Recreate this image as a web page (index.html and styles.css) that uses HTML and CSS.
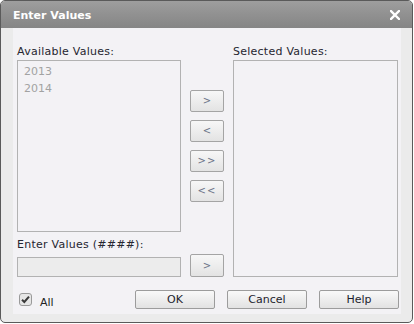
FILE: index.html
```html
<!DOCTYPE html>
<html>
<head>
<meta charset="utf-8">
<link rel="stylesheet" href="styles.css">
</head>
<body>
<div class="dialog">
  <div class="titlebar">
    <span class="title">Enter Values</span>
    <svg class="close" width="10" height="10" viewBox="0 0 10 10"><path d="M1 1L9 9M9 1L1 9" stroke="#fff" stroke-width="2.4" stroke-linecap="square"/></svg>
  </div>
  <div class="frame">
    <div class="panel">
      <div class="main">
        <div class="col left">
          <div class="label">Available Values:</div>
          <div class="listbox avail">
            <div class="item">2013</div>
            <div class="item">2014</div>
          </div>
          <div class="label enter">Enter Values (####):</div>
          <div class="input"></div>
        </div>
        <div class="col mid">
          <button class="arrow first">&gt;</button>
          <button class="arrow">&lt;</button>
          <button class="arrow dbl">&gt;&gt;</button>
          <button class="arrow dbl">&lt;&lt;</button>
          <button class="arrow add">&gt;</button>
        </div>
        <div class="col right">
          <div class="label">Selected Values:</div>
          <div class="listbox sel"></div>
        </div>
      </div>
      <div class="footer">
        <span class="check"><svg width="13" height="13" viewBox="0 0 13 13"><rect x="0.5" y="0.5" width="12" height="12" rx="2.5" fill="#e6e6e6" stroke="#9a9a9a"/><path d="M3 6.8L5.3 9L10 3.6" fill="none" stroke="#3a3a3a" stroke-width="2"/></svg></span>
        <span class="all">All</span>
        <div class="buttons">
          <button class="btn">OK</button>
          <button class="btn">Cancel</button>
          <button class="btn">Help</button>
        </div>
      </div>
    </div>
  </div>
</div>
</body>
</html>
```

FILE: styles.css
```css
html, body {
  margin: 0;
  padding: 0;
  background: #ffffff;
}
.dialog {
  width: 413px;
  height: 323px;
  box-sizing: border-box;
  border: 1px solid #5a5a5a;
  border-radius: 5px;
  overflow: hidden;
  background: #ebebeb;
  display: flex;
  flex-direction: column;
  font-family: "DejaVu Sans", Verdana, sans-serif;
  font-size: 11px;
  color: #262630;
}
.titlebar {
  height: 27px;
  flex: none;
  display: flex;
  align-items: center;
  padding: 0 12px 0 12px;
  background: linear-gradient(#9e9e9e 0%, #929292 45%, #858585 100%);
}
.title {
  color: #ffffff;
  font-weight: bold;
  font-size: 11px;
  padding-top: 1px;
}
.close {
  margin-left: auto;
  display: block;
}
.frame {
  flex: 1;
  display: flex;
  padding: 0 11px 8px 12px;
}
.panel {
  flex: 1;
  background: #f3f2f5;
  display: flex;
  flex-direction: column;
  padding: 17px 2px 0 4px;
}
.main {
  display: flex;
}
.col {
  display: flex;
  flex-direction: column;
}
.left {
  width: 164px;
}
.mid {
  width: 34px;
  margin-left: 9px;
}
.right {
  width: 165px;
  margin-left: 9px;
}
.label {
  height: 14px;
  line-height: 14px;
  letter-spacing: 0.25px;
  white-space: nowrap;
}
.listbox {
  box-sizing: border-box;
  border: 1px solid #b2b2b2;
  background: #f3f2f5;
  margin-top: 1px;
  padding: 2px 6px;
}
.avail {
  height: 172px;
}
.sel {
  height: 217px;
}
.item {
  color: #a2a2a2;
  line-height: 17px;
}
.enter {
  margin-top: 6px;
}
.input {
  box-sizing: border-box;
  height: 20px;
  margin-top: 5px;
  border: 1px solid #b2b2b2;
  background: #ececec;
}
.arrow {
  box-sizing: border-box;
  width: 34px;
  height: 22px;
  margin: 8px 0 0 0;
  padding: 0;
  border: 1px solid #a4a4a4;
  border-radius: 2px;
  background: linear-gradient(#f7f7f7, #e3e3e3);
  font-family: "DejaVu Sans", Verdana, sans-serif;
  font-size: 10px;
  color: #6c7488;
  line-height: 20px;
}
.arrow.first {
  margin-top: 45px;
}
.arrow.dbl {
  letter-spacing: 1px;
}
.arrow.add {
  margin-top: 52px;
  height: 23px;
}
.footer {
  display: flex;
  align-items: center;
  margin-top: 13px;
  height: 19px;
}
.check {
  display: block;
  margin-left: 2px;
  height: 13px;
}
.check svg {
  display: block;
}
.all {
  margin-left: 8px;
  padding-top: 5px;
  font-size: 11px;
  color: #222;
}
.buttons {
  margin-left: auto;
  display: flex;
  gap: 12px;
}
.btn {
  box-sizing: border-box;
  width: 80px;
  height: 19px;
  margin: 0;
  padding: 0;
  border: 1px solid #9c9c9c;
  border-radius: 2px;
  background: linear-gradient(#f9f9f9, #e2e2e2);
  font-family: "DejaVu Sans", Verdana, sans-serif;
  font-size: 11px;
  color: #1e1e2e;
  line-height: 17px;
}
```
